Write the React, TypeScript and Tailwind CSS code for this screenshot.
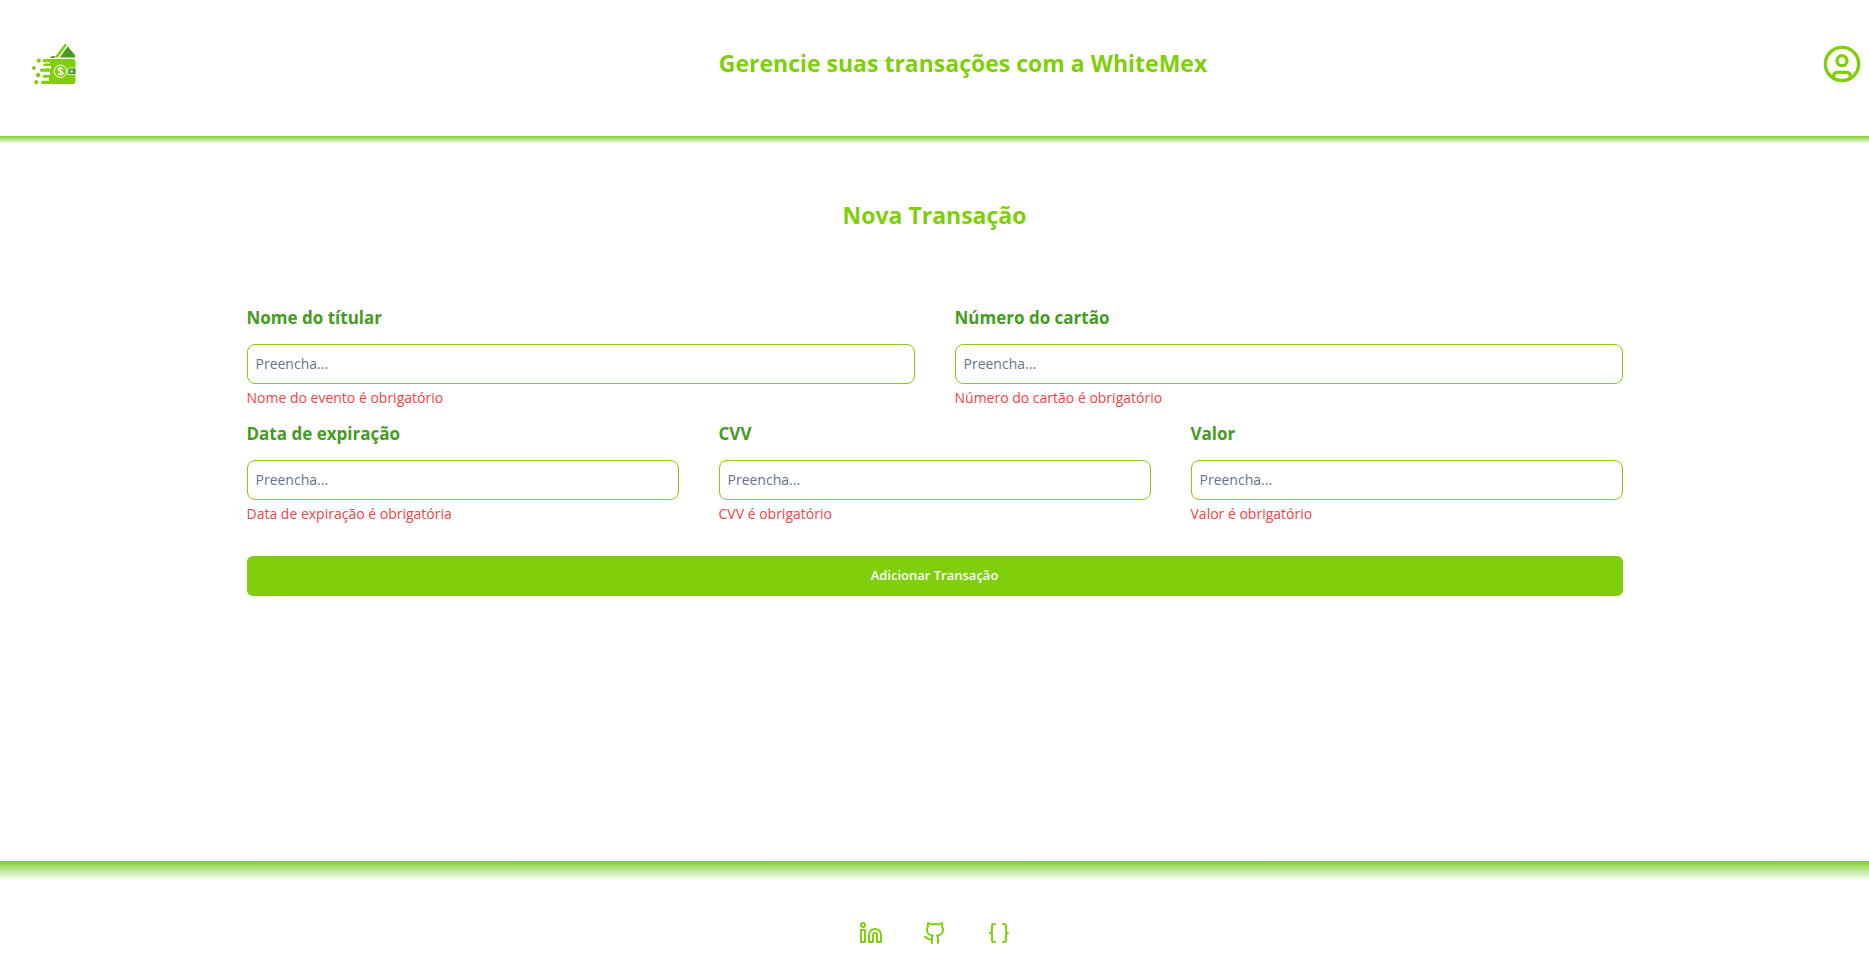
import { Braces, CircleUser, Github, Linkedin } from "lucide-react";

type FieldProps = { id: string; label: string; error: string };

function Field({ id, label, error }: FieldProps) {
  return (
    <div className="flex min-w-0 flex-1 flex-col">
      <label htmlFor={id} className="text-[17px] leading-7 font-bold text-[#459c21]">
        {label}
      </label>
      <input
        id={id}
        type="text"
        placeholder="Preencha..."
        aria-describedby={`${id}-error`}
        className="mt-3 h-10 w-full rounded-lg border border-[#80ce0c] bg-white px-2 pb-0.5 text-sm text-slate-900 placeholder:text-[#64748b] focus:ring-1 focus:ring-[#80ce0c] focus:outline-none"
      />
      <p id={`${id}-error`} className="mt-1 text-sm leading-5 text-[#ef4444]">
        {error}
      </p>
    </div>
  );
}

function Logo() {
  return (
    <svg viewBox="0 0 50 48" className="h-12 w-[50px]" role="img" aria-label="WhiteMex">
      <path d="M24.500 17.500 34.500 4.300q.8-.8 1.600-.1l.9.900L28 17.500z" fill="#80ce0c" />
      <path d="M29.800 17.500 37.800 6.200q3 4.500 6.500 7.800 1.300 1.500.7 3.500z" fill="#459c21" />
      <path d="M20 18q1-2 3-2h2.200l-1.300 2z" fill="#459c21" />
      <path
        d="M14 19h29a2.500 2.500 0 0 1 2.500 2.500v20a2.500 2.500 0 0 1-2.500 2.500H12.500a1.600 1.600 0 0 1 0-3.200H19v-3h-5a1.400 1.400 0 0 1 0-2.800h6v-3.200h-8.500a1.600 1.600 0 0 1 0-3.200H21v-2.600h-6.500a1.300 1.300 0 0 1 0-2.600H20v-1.200h-6a1.600 1.600 0 0 1 0-3.200z"
        fill="#80ce0c"
      />
      <g fill="#80ce0c">
        <circle cx="8.800" cy="20.700" r="2.100" />
        <circle cx="3.900" cy="28" r="2" />
        <circle cx="8" cy="35" r="2.200" />
        <circle cx="6.200" cy="42.200" r="2.100" />
      </g>
      <circle cx="30.500" cy="31.300" r="6.200" fill="none" stroke="#fff" strokeWidth="1" />
      <path
        d="M32.800 29.300c-.4-1.700-4.600-1.700-4.600.3s4.700 1.400 4.700 3.500-4.300 2.100-4.900.2M30.500 26.800v9"
        fill="none"
        stroke="#fff"
        strokeWidth="1.300"
      />
      <rect x="38" y="28" width="8" height="6.600" rx="1" fill="#459c21" stroke="#fff" strokeWidth=".8" />
      <rect x="40.500" y="30.200" width="2.200" height="2.200" rx=".5" fill="#fff" />
    </svg>
  );
}

export default function App() {
  return (
    <div className="flex min-h-screen flex-col bg-white font-['Open_Sans',sans-serif]">
      <header>
        <div className="flex h-34 items-center justify-between pr-[7px] pb-2 pl-1.5">
          <a href="#inicio" className="px-6">
            <Logo />
          </a>
          <h1 className="pb-0.5 text-[23px] leading-8 font-bold text-[#80ce0c]">
            Gerencie suas transações com a WhiteMex
          </h1>
          <button type="button" aria-label="Perfil" className="text-[#80ce0c]">
            <CircleUser size={40} />
          </button>
        </div>
        <div className="h-2 bg-linear-to-b from-[#80ce0c] to-white" />
      </header>

      <main className="flex flex-1 flex-col items-center px-6 pt-14">
        <h2 className="pb-0.5 text-[23px] leading-[30px] font-bold text-[#80ce0c]">Nova Transação</h2>
        <form className="mt-18 flex w-full max-w-344 flex-col" onSubmit={(e) => e.preventDefault()}>
          <div className="flex gap-10">
            <Field id="titular" label="Nome do títular" error="Nome do evento é obrigatório" />
            <Field id="cartao" label="Número do cartão" error="Número do cartão é obrigatório" />
          </div>
          <div className="mt-3 flex gap-10">
            <Field id="expiracao" label="Data de expiração" error="Data de expiração é obrigatória" />
            <Field id="cvv" label="CVV" error="CVV é obrigatório" />
            <Field id="valor" label="Valor" error="Valor é obrigatório" />
          </div>
          <button
            type="submit"
            className="mt-8 h-10 rounded-md bg-[#80ce0c] text-[13px] font-semibold text-slate-50"
          >
            Adicionar Transação
          </button>
        </form>
      </main>

      <footer>
        <div className="h-5 bg-linear-to-b from-[#80ce0c] to-white" />
        <nav aria-label="Links" className="flex justify-center gap-10 pt-10 pb-[21px] text-[#80ce0c]">
          <a href="#linkedin" aria-label="LinkedIn">
            <Linkedin size={24} />
          </a>
          <a href="#github" aria-label="GitHub">
            <Github size={24} />
          </a>
          <a href="#codigo" aria-label="Código">
            <Braces size={24} />
          </a>
        </nav>
      </footer>
    </div>
  );
}
